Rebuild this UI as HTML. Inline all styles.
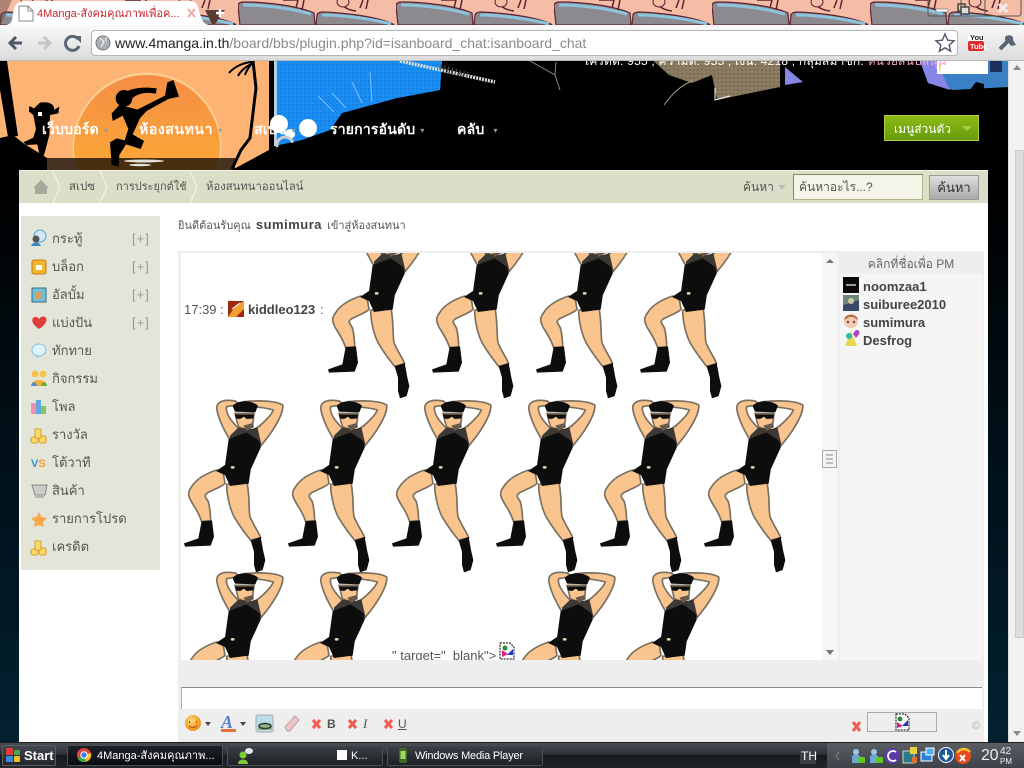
<!DOCTYPE html>
<html lang="th"><head><meta charset="utf-8"><title>4Manga</title>
<style>
*{box-sizing:border-box}
html,body{margin:0;padding:0;width:1024px;height:768px;overflow:hidden;background:#000}
body{font-family:"Liberation Sans","DejaVu Sans","Noto Sans CJK SC",sans-serif;font-size:12px;color:#555;position:relative}
.a{position:absolute;white-space:nowrap}
.n{color:#fff;font-weight:bold;font-size:14px;top:120px;line-height:18px;letter-spacing:.2px}
.n i{font-style:normal;font-size:8px;color:#999;margin-left:5px;vertical-align:1px}
.s{left:52px;font-size:13px;color:#555;line-height:16px}
.p{left:132px;font-size:13px;color:#999;line-height:16px;letter-spacing:1px}
.u{left:863px;font-size:13px;font-weight:bold;color:#444;line-height:16px}
.t{color:#fff;font-size:11px;line-height:16px;top:748px}
.bc{font-size:11.5px;line-height:15px;top:180px}
.task{position:absolute;top:745px;height:21px;width:156px;border:1px solid #4a4e55;border-radius:2px;background:linear-gradient(#3c4046,#1e2126)}
</style></head><body>
<div class="a" style="left:0;top:170px;width:1024px;height:572px;background:linear-gradient(#000 0,#011019 50%,#022130 100%)"></div>

<!-- banner -->
<svg class="a" style="left:0;top:55px" width="1008" height="115" viewBox="0 55 1008 115">
<defs>
<linearGradient id="sun" x1="0" y1="0" x2="0" y2="1"><stop offset="0" stop-color="#f58d45"/><stop offset="1" stop-color="#fdb62f"/></linearGradient>
<pattern id="blue" width="4" height="4" patternUnits="userSpaceOnUse"><rect width="4" height="4" fill="#1a8df3"/><circle cx="1" cy="1" r=".8" fill="#0c72da"/></pattern>
<pattern id="tan" width="4" height="4" patternUnits="userSpaceOnUse"><rect width="4" height="4" fill="#8a7c66"/><circle cx="2" cy="2" r="1" fill="#7a6a3e"/></pattern>
</defs>
<rect x="0" y="55" width="1008" height="115" fill="#000"/>
<rect x="0" y="55" width="269" height="115" fill="#fcb374"/>
<circle cx="147" cy="147" r="74.500" fill="#fdcd93"/>
<circle cx="147" cy="148" r="73" fill="url(#sun)"/>
<rect x="45" y="158" width="190" height="12" fill="#000" opacity=".72"/>
<path d="M0,138L13,135L23,143L47,158V170H0Z" fill="#000"/>
<path d="M232,170L269,150V170Z" fill="#000"/>
<path d="M0,61H7L18,136L8,137L0,90Z" fill="#000"/>
<path d="M232,169L241,150L250,138L256,88L253,61" stroke="#000" stroke-width="3" fill="none"/>
<path d="M253,62C245,62 235,66 229,73M253,63C247,66 241,70 238,76M253,62C249,67 246,71 245,75" stroke="#000" stroke-width="2" fill="none"/>
<g transform="translate(0,55) scale(.33333)" fill="#000">
<circle cx="372" cy="130" r="25"/>
<path d="M350,140C365,105 410,92 470,100L468,116C425,108 400,120 385,145Z"/>
<path d="M400,170L495,122L502,82L520,75L537,125L505,132L440,168L405,205Z"/>
<path d="M358,150L430,168L398,238L432,258L422,282L378,268L358,300L356,335L335,330L330,262L350,250L374,256L385,222L368,182L338,198L335,175Z"/>
<path d="M120,143C150,138 165,150 162,165L178,155L175,175L150,180L148,240L135,290L130,305L118,298L112,268L80,270L70,262L100,248L108,222L100,180L87,170L88,153L102,160Z"/>
</g>
<g fill="#fff" opacity=".85"><ellipse cx="144" cy="161" rx="20" ry="1.500"/><ellipse cx="140" cy="165" rx="11" ry="1.200"/></g>
<rect x="38" y="112" width="4" height="4" fill="#fff"/>
<!-- blue -->
<path d="M277,61H442L440,90L397,98L342,113L330,130L302,140L274,146V110L277,108Z" fill="#1a8df3"/>
<path d="M277,61H442L440,90L397,98L342,113L330,130L302,140L274,146V110L277,108Z" fill="url(#blue)"/>
<rect x="274" y="61" width="3" height="85" fill="#b7cfe6"/>
<circle cx="308" cy="128" r="9" fill="#fff"/><circle cx="279" cy="124" r="9" fill="#fff"/><circle cx="290" cy="134" r="5" fill="#fff"/>
<circle cx="285" cy="145" r="8" fill="none" stroke="#ccc" stroke-width="3"/>
<path d="M274,148L302,140L330,131V170H274Z" fill="#000"/>
<path d="M400,61L495,82" stroke="#ddd" stroke-width="3.500" stroke-dasharray="2 1"/>
<path d="M440,67L470,76" stroke="#555" stroke-width="6" stroke-dasharray="1 3"/>
<g stroke="#7dc0ff" stroke-width="1" fill="none"><path d="M352,82L362,103M318,96L334,112M332,93L346,108M370,72L372,102"/></g>
<!-- tan -->
<path d="M647,55H780V87L717,100L712,75L692,83L669,75Z" fill="url(#tan)"/>
<path d="M664,105C672,94 680,86 692,81" stroke="#a89a84" fill="none"/>
<path d="M715,88V100L730,96" stroke="#fff" fill="none"/>
<path d="M530,61L555,75L560,90M555,75L556,62" stroke="#888" fill="none"/>
<!-- right -->
<path d="M785,67L803,82L785,85Z" fill="#8686e6"/>
<path d="M920,61H1008V87L953,90L928,83Z" fill="#3a80c4"/>
<path d="M920,61H936L950,90L928,83Z" fill="#8686e6"/>
<rect x="937" y="60" width="51" height="14" fill="#fff"/>
<path d="M939,62A8,8,0,0,1,939,72Z" fill="#fcd25c"/>
<rect x="990" y="60" width="12" height="12" fill="#1d2f5b"/>
<path d="M970,90L976,82L984,84V90Z" fill="#000"/>
</svg>
<div class="a" style="left:585px;top:54px;color:#fff;font-size:12px;line-height:14px;letter-spacing:.2px">เครดิต: 955 , ความดี: 955 , เงิน: 4218 , กลุ่มสมาชิก: <span style="color:#f4a0c8">หน่วยสนับสนุน</span></div>

<!-- tab strip & toolbar -->
<svg class="a" style="left:0;top:0" width="1024" height="26" viewBox="0 0 1024 26">
<defs><pattern id="tile" x="80" y="0" width="158" height="26" patternUnits="userSpaceOnUse">
<rect width="158" height="26" fill="#f5bda6"/>
<path d="M2,25L0,6Q0,2 6,2C30,2 60,6 76,13L77,25Z" fill="#8c8a8e" stroke="#5b2330" stroke-width="1.200"/>
<path d="M5,5C30,5 55,9 73,14" stroke="#8cc4de" stroke-width="3" fill="none"/>
<path d="M78,25L79,15Q80,12 85,12C110,13 140,17 155,24L156,25Z" fill="#8c8a8e" stroke="#5b2330" stroke-width="1.200"/>
<path d="M84,15C105,15 135,19 153,24" stroke="#8cc4de" stroke-width="3" fill="none"/>
<path d="M100,0C103,5 108,10 118,11M125,0L122,8M130,0L128,9" stroke="#5b2330" stroke-width="1.500" fill="none"/>
<ellipse cx="105" cy="2" rx="6" ry="5" fill="#f5bda6" stroke="#5b2330"/>
<path d="M60,0L58,8M66,0L64,10M45,0H60" stroke="#5b2330" stroke-width="1.500" fill="none"/>
</pattern></defs>
<rect width="1024" height="26" fill="url(#tile)"/>
<path d="M0,0H12L2,22L0,24Z" fill="#6b4a42" opacity=".5"/>
<path d="M212,24L205,10L225,10L215,24Z" fill="#5b3a30"/>
<path d="M220,9V17M216,13H224" stroke="#fff" stroke-width="2.500"/>
<path d="M6,25C12,24 12,20 13,14C14,6 16,1 26,1H190C197,1 198,6 200,14C202,20 203,24 209,25Z" fill="#fff"/>
<path d="M19,6H28L33,11V21H19Z" fill="#fff" stroke="#888"/><path d="M28,6V11H33" stroke="#888" fill="none"/>
<path d="M188,9L195,17M195,9L188,17" stroke="#f3a8a8" stroke-width="2"/>
<g fill="none"><rect x="928" y="-3" width="33" height="19" rx="2" stroke="#555"/><rect x="961" y="-3" width="24" height="19" stroke="#555"/><rect x="985" y="-3" width="36" height="19" rx="2" stroke="#555"/></g>
<rect x="936" y="9" width="12" height="3" fill="#fff" stroke="#555" stroke-width=".5"/>
<rect x="958" y="4" width="7" height="7" fill="none" stroke="#444" stroke-width="1.500"/><rect x="961" y="7" width="8" height="7" fill="#ddd" stroke="#444" stroke-width="1.500"/>
<path d="M999,4L1007,12M1007,4L999,12" stroke="#eee" stroke-width="3"/>
</svg>
<div class="a" style="left:37px;top:6px;font-size:11px;color:#c8232c;line-height:16px">4Manga-สังคมคุณภาพเพื่อค...</div>

<div class="a" style="left:0;top:25px;width:1024px;height:36px;background:linear-gradient(#f9f9f9,#dcdcdc);border-bottom:1px solid #b8b8b8"></div>
<div class="a" style="left:91px;top:30px;width:867px;height:26px;background:#fff;border:1px solid #b5b5b5;border-radius:4px"></div>
<svg class="a" style="left:0;top:25px" width="1024" height="36" viewBox="0 25 1024 36">
<path d="M22,43H11M16,37L10,43L16,49" stroke="#4d5868" stroke-width="3" fill="none"/>
<path d="M38,43H49M44,37L50,43L44,49" stroke="#c4c6c8" stroke-width="3" fill="none"/>
<path d="M78,39A7,7,0,1,0,79,46" stroke="#5b6573" stroke-width="3" fill="none"/><path d="M74,36H81V43Z" fill="#5b6573"/>
<circle cx="103" cy="43" r="7" fill="#aab0b8" stroke="#777"/><path d="M100,38L104,42L101,47M106,37V41" stroke="#fff" fill="none"/>
<path d="M945,34L947.700,40.200L954,40.800L949.200,45L950.600,51.200L945,47.800L939.400,51.200L940.800,45L936,40.800L942.300,40.200Z" fill="#fff" stroke="#566070" stroke-width="1.500"/>
<rect x="968" y="34" width="16" height="8" fill="#fff"/><rect x="968" y="41" width="16" height="10" rx="2" fill="#dd2a2a"/>
<path d="M1000,49L1008,41" stroke="#5a6472" stroke-width="4"/><path d="M1006,36C1010,34 1014,36 1013,40L1016,45L1011,46L1008,42C1005,42 1004,38 1006,36Z" fill="#5a6472"/>
</svg>
<div class="a" style="left:115px;top:34px;font-size:14px;line-height:18px;color:#8a8a8a"><span style="color:#222">www.4manga.in.th</span>/board/bbs/plugin.php?id=isanboard_chat:isanboard_chat</div>
<div class="a" style="left:970px;top:34px;font-size:7.500px;font-weight:bold;color:#222;line-height:8px">You</div>
<div class="a" style="left:970px;top:43px;font-size:7.500px;font-weight:bold;color:#fff;line-height:8px">Tube</div>

<!-- nav -->
<div class="a n" style="left:42px">เว็บบอร์ด<i>▾</i></div>
<div class="a n" style="left:139px;letter-spacing:.6px">ห้องสนทนา<i>▾</i></div>
<div class="a n" style="left:254px">สเปซ<i>▾</i></div>
<div class="a n" style="left:330px">รายการอันดับ<i>▾</i></div>
<div class="a n" style="left:457px">คลับ <i>▾</i></div>
<div class="a" style="left:884px;top:115px;width:95px;height:26px;border:1px solid #b5cb3e;background:linear-gradient(#8dbb16,#659a0c);color:#fff;line-height:26px;padding-left:9px;font-size:12px">เมนูส่วนตัว<span style="position:absolute;left:77px;top:10px;width:0;height:0;border:5px solid transparent;border-top:5px solid #a8cc4a"></span></div>

<!-- main -->
<div class="a" style="left:19px;top:170px;width:969px;height:572px;background:#fff"></div>
<div class="a" style="left:19px;top:170px;width:969px;height:33px;background:#dcdfc8;border-top:1px solid #f4f5ea"></div>
<svg class="a" style="left:19px;top:170px" width="200" height="33" viewBox="19 170 200 33">
<path d="M33,188L41,180L49,188H47V194H35V188Z" fill="#a8a89c"/>
<path d="M53,171L60,187L53,203M100,171L107,187L100,203M190,171L197,187L190,203" stroke="#f4f5ea" stroke-width="1" fill="none"/>
</svg>
<div class="a bc" style="left:69px">สเปซ</div>
<div class="a bc" style="left:116px;font-size:11px">การประยุกต์ใช้</div>
<div class="a bc" style="left:206px;font-size:11.300px">ห้องสนทนาออนไลน์</div>
<div class="a" style="left:743px;top:180px;line-height:15px">ค้นหา<span style="display:inline-block;margin-left:4px;width:0;height:0;border:4px solid transparent;border-top:5px solid #bbb;vertical-align:-3px"></span></div>
<div class="a" style="left:793px;top:174px;width:130px;height:26px;background:#f4f5e8;border:1px solid #b3b38e;border-top-color:#84845c;border-left-color:#84845c;padding-left:5px;line-height:24px">ค้นหาอะไร...?</div>
<div class="a" style="left:929px;top:175px;width:50px;height:25px;background:linear-gradient(#dedede,#aaa);border:1px solid #999;text-align:center;line-height:23px;font-size:13px;color:#333">ค้นหา</div>

<!-- sidebar -->
<div class="a" style="left:21px;top:216px;width:139px;height:354px;background:#e4e5d9"></div>
<svg class="a" style="left:21px;top:225px" width="30" height="335" viewBox="21 225 30 335">
<circle cx="40" cy="236" r="6" fill="#cfe8fa" stroke="#5a9fd0"/><circle cx="36" cy="239" r="3.500" fill="#555"/><path d="M31,246C33,241 39,241 41,246Z" fill="#3a88c8"/>
<rect x="32" y="260" width="14" height="14" rx="2" fill="#f6b42c" stroke="#c27d10"/><rect x="36" y="265" width="6" height="5" fill="#fff"/>
<rect x="32" y="288" width="14" height="14" fill="#72bfd8" stroke="#3b6c8a"/><rect x="36" y="292" width="6" height="7" fill="#d9a060"/>
<path d="M39,329C33,325 31,321 33,318C35,316 38,317 39,319C40,317 44,315 46,318C48,321 44,326 39,329Z" fill="#e23c3c"/>
<ellipse cx="39" cy="350" rx="7" ry="6" fill="#dff1fb" stroke="#86c0e2"/><path d="M37,355L36,358L40,356Z" fill="#86c0e2"/>
<circle cx="35" cy="374" r="3.500" fill="#f8c24c"/><circle cx="43" cy="374" r="3.500" fill="#f8c24c"/><path d="M31,386C31,378 47,378 47,386Z" fill="#f4b030"/><path d="M31,386C32,381 36,381 37,386Z" fill="#4a90d0"/><path d="M41,386C42,381 46,381 47,386Z" fill="#60b040"/>
<rect x="31" y="403" width="5" height="11" fill="#f090b0"/><rect x="36" y="400" width="5" height="14" fill="#60a8e0"/><rect x="41" y="406" width="5" height="8" fill="#80c860"/>
<rect x="31" y="437" width="7" height="6" rx="2" fill="#fcd868" stroke="#d8a030"/><rect x="39" y="436" width="7" height="7" rx="2" fill="#fcd868" stroke="#d8a030"/><rect x="35" y="429" width="6" height="9" rx="1" fill="#fcd868" stroke="#d8a030"/>
<text x="31" y="467" font-family="Liberation Sans" font-size="11" font-weight="bold" fill="#2a94d0">V<tspan fill="#f0a030">S</tspan></text>
<path d="M32,485H47L45,495H35ZM35,497H44" fill="#c8cdc8" stroke="#888"/>
<path d="M39,512L41.500,517L47,518L43,522L44,527L39,525L34,527L35,522L31,518L36.500,517Z" fill="#f8a848"/>
<rect x="31" y="549" width="7" height="6" rx="2" fill="#fcd868" stroke="#d8a030"/><rect x="39" y="548" width="7" height="7" rx="2" fill="#fcd868" stroke="#d8a030"/><rect x="35" y="541" width="6" height="9" rx="1" fill="#fcd868" stroke="#d8a030"/>
</svg>
<div class="a s" style="top:231px">กระทู้</div><div class="a p" style="top:231px">[+]</div>
<div class="a s" style="top:259px">บล็อก</div><div class="a p" style="top:259px">[+]</div>
<div class="a s" style="top:287px">อัลบั้ม</div><div class="a p" style="top:287px">[+]</div>
<div class="a s" style="top:315px">แบ่งปัน</div><div class="a p" style="top:315px">[+]</div>
<div class="a s" style="top:343px">ทักทาย</div>
<div class="a s" style="top:371px">กิจกรรม</div>
<div class="a s" style="top:399px">โพล</div>
<div class="a s" style="top:427px">รางวัล</div>
<div class="a s" style="top:455px">โต้วาที</div>
<div class="a s" style="top:483px">สินค้า</div>
<div class="a s" style="top:511px">รายการโปรด</div>
<div class="a s" style="top:539px">เครดิต</div>

<div class="a" style="left:178px;top:217px;line-height:16px;font-size:11px">ยินดีต้อนรับคุณ <b style="color:#444;font-size:13px;letter-spacing:.5px;margin:0 2px">sumimura</b> เข้าสู่ห้องสนทนา</div>

<!-- chat box -->
<div class="a" style="left:178px;top:251px;width:806px;height:491px;background:#eee"></div>
<div class="a" style="left:181px;top:253px;width:641px;height:407px;background:#fff"></div>
<svg class="a" style="left:181px;top:253px" width="641" height="407" viewBox="181 253 641 407">
<defs><filter id="b" x="-5%" y="-5%" width="110%" height="110%"><feGaussianBlur stdDeviation=".35"/></filter>
<g id="d" transform="scale(.33333) translate(-12,-12)" filter="url(#b)">
<g fill="#f9c48d" stroke="#7a7060" stroke-width="5" stroke-linejoin="round">
<path d="M150,135C135,110 115,75 110,40C110,20 130,12 165,18L180,28L140,35C135,50 150,75 175,100Z"/>
<path d="M190,20C240,15 290,18 308,30C312,55 280,110 240,155L222,105C245,90 275,60 280,45C255,38 225,35 205,35Z"/>
<path d="M165,55L222,55L218,90L200,105L175,95Z"/>
<path d="M110,225C80,235 50,250 35,275C20,295 25,305 40,330C50,345 60,365 65,380L92,378C92,360 90,340 85,320C75,305 70,300 85,292C110,280 130,272 135,265L130,235Z"/>
<path d="M140,268L200,258C210,300 205,340 210,365C220,390 235,410 242,428L212,436C195,415 180,395 165,370C150,345 140,300 140,268Z"/>
</g>
<path d="M150,122L175,98L215,102L232,96L245,152L150,138Z" fill="#3a3834"/>
<g fill="#0a0a0a">
<path d="M158,34C170,14 215,14 234,32L226,52L165,50Z"/>
<path d="M165,58L222,58L220,70L200,72L192,65L180,72L168,70Z"/>
<path d="M190,92L218,84L222,96L200,108Z" fill="#6b5a48"/>
<path d="M146,132L200,112L238,138L242,158L210,228L135,212Z"/>
<path d="M108,228L135,210L212,225L206,266L150,273L135,240Z"/>
<path d="M65,378L96,376L102,425L92,452L15,455L12,445L55,430Z"/>
<path d="M212,436L242,426L250,470L256,495L248,525L228,532L222,510L222,470Z"/>
</g>
<ellipse cx="158" cy="217" rx="6" ry="4" fill="#e8d6b0"/>
</g></defs>
<use href="#d" x="328" y="225"/><use href="#d" x="432" y="225"/><use href="#d" x="536" y="225"/><use href="#d" x="640" y="225"/>
<use href="#d" x="184" y="399"/><use href="#d" x="288" y="399"/><use href="#d" x="392" y="399"/><use href="#d" x="496" y="399"/><use href="#d" x="600" y="399"/><use href="#d" x="704" y="399"/>
<use href="#d" x="184" y="571"/><use href="#d" x="288" y="571"/><use href="#d" x="516" y="571"/><use href="#d" x="620" y="571"/>
<!-- avatar -->
<rect x="228" y="301" width="16" height="16" fill="#a02810"/><path d="M228,317L236,305L244,301V309L236,317Z" fill="#f0a030"/><path d="M232,309L240,303" stroke="#fff"/>
<!-- broken image -->
<path d="M500,643H510L514,647V659H500Z" fill="#fff" stroke="#000" stroke-dasharray="2 1"/><circle cx="505" cy="648" r="2.500" fill="#2a8a3a"/><path d="M502,650L508,654L502,657Z" fill="#e0208a"/><path d="M513,649L507,655H513Z" fill="#2030c0"/>
</svg>
<div class="a" style="left:184px;top:302px;font-size:13px;line-height:16px;color:#555">17:39 :</div>
<div class="a" style="left:248px;top:302px;font-size:13px;line-height:16px;font-weight:bold;color:#444">kiddleo123</div>
<div class="a" style="left:320px;top:302px;font-size:13px;line-height:16px;color:#555">:</div>
<div class="a" style="left:392px;top:649px;font-size:13px;line-height:14px;height:11px;overflow:hidden;color:#555">" target="_blank"&gt;</div>

<!-- chat scrollbar -->
<div class="a" style="left:822px;top:253px;width:16px;height:407px;background:#f6f6f6"></div>
<svg class="a" style="left:822px;top:253px" width="16" height="407" viewBox="822 253 16 407">
<path d="M826,263L830,259L834,263Z" fill="#777"/>
<path d="M826,650L830,655L834,650Z" fill="#777"/>
<rect x="822.500" y="450.500" width="14" height="17" fill="#f4f4f4" stroke="#aaa"/><path d="M826,455H833M826,459H833M826,463H833" stroke="#888"/>
</svg>

<!-- users -->
<div class="a" style="left:838px;top:251px;width:146px;height:409px;background:#eee"></div>
<div class="a" style="left:840px;top:274px;width:142px;height:386px;background:#f5f5f5"></div>
<div class="a" style="left:838px;top:256px;width:146px;text-align:center;line-height:16px;color:#666">คลิกที่ชื่อเพื่อ PM</div>
<svg class="a" style="left:843px;top:277px" width="17" height="72" viewBox="843 277 17 72">
<rect x="843" y="277" width="16" height="16" fill="#0a0a0a"/><rect x="846" y="284" width="10" height="2" fill="#999"/>
<rect x="843" y="295" width="16" height="16" fill="#6e8878"/><path d="M843,305L859,300V311H843Z" fill="#3a4868"/><circle cx="851" cy="301" r="3" fill="#c8c8a0"/>
<circle cx="851" cy="321" r="7" fill="#f3c7ae"/><path d="M844,320C845,313 857,313 858,320L853,317L849,317Z" fill="#b46a50"/><circle cx="848" cy="322" r="1.200" fill="#744"/><circle cx="854" cy="322" r="1.200" fill="#744"/>
<path d="M845,346L851,331L857,346Z" fill="#e8d84c"/><circle cx="849" cy="336" r="3" fill="#2fb8b0"/><path d="M855,331A2,2,0,0,1,859,334L856,338L853,334Z" fill="#b040c0"/>
</svg>
<div class="a u" style="top:279px">noomzaa1</div>
<div class="a u" style="top:297px">suiburee2010</div>
<div class="a u" style="top:315px">sumimura</div>
<div class="a u" style="top:333px">Desfrog</div>

<!-- input -->
<div class="a" style="left:181px;top:687px;width:801px;height:22px;background:#fff;border-top:1px solid #8c8c8c;border-left:1px solid #b0b0b0"></div>

<!-- tools -->
<svg class="a" style="left:178px;top:710px" width="806" height="32" viewBox="178 710 806 32">
<defs><radialGradient id="sm" cx=".4" cy=".35"><stop offset="0" stop-color="#fde07a"/><stop offset="1" stop-color="#f49a24"/></radialGradient></defs>
<circle cx="193" cy="723" r="8" fill="url(#sm)"/><path d="M189,722h1M196,722h1" stroke="#a05a10" stroke-width="2"/><path d="M189,726Q193,729 197,726" stroke="#a05a10" fill="none"/>
<path d="M205,722H211L208,726Z" fill="#444"/>
<text x="221" y="728" font-family="Liberation Serif" font-style="italic" font-weight="bold" font-size="18" fill="#5a7fd0">A</text>
<rect x="221" y="729" width="15" height="3" fill="#e8703c"/>
<path d="M240,722H246L243,726Z" fill="#444"/>
<rect x="256" y="715" width="17" height="17" rx="2" fill="#bcdcec" stroke="#aaa"/><path d="M258,728L265,722L272,727V730H258Z" fill="#8cbc7c"/><ellipse cx="265" cy="726" rx="6" ry="2.500" fill="none" stroke="#333" stroke-width="1.500"/>
<path d="M285,727L295,716L299,720L290,731H287Z" fill="#f3c2c2" stroke="#aaa"/>
<g stroke="#f35b4f" stroke-width="3"><path d="M313,720L320,728M320,720L313,728M349,720L356,728M356,720L349,728M385,720L392,728M392,720L385,728M853,722L860,731M860,722L853,731"/></g>
<rect x="867.500" y="712.500" width="69" height="19" fill="none" stroke="#aaa"/>
<path d="M896,714H905L909,718V730H896Z" fill="#fff" stroke="#000" stroke-dasharray="2 1"/><circle cx="900" cy="719" r="2.500" fill="#2a8a3a"/><path d="M897,722L903,726L897,728Z" fill="#e0208a"/><path d="M908,720L902,726H908Z" fill="#2030c0"/>
<text x="972" y="729" font-family="Liberation Sans" font-size="11" fill="#aaa">©</text>
</svg>
<div class="a" style="left:327px;top:717px;font-weight:bold;color:#555;font-size:12px;line-height:14px">B</div>
<div class="a" style="left:363px;top:717px;font-style:italic;font-family:'Liberation Serif',serif;color:#555;font-size:13px;line-height:14px">I</div>
<div class="a" style="left:398px;top:717px;text-decoration:underline;color:#555;font-size:12px;line-height:14px">U</div>

<!-- page scrollbar -->
<div class="a" style="left:1008px;top:61px;width:16px;height:681px;background:#f1f1f1;border-left:1px solid #ddd"></div>
<div class="a" style="left:1015px;top:150px;width:9px;height:488px;background:#dcdcdc;border:1px solid #ccc"></div>
<svg class="a" style="left:1008px;top:61px" width="16" height="681" viewBox="1008 61 16 681">
<path d="M1013,70L1017,65L1021,70Z" fill="#888"/><path d="M1013,731L1017,736L1021,731Z" fill="#888"/>
</svg>

<!-- taskbar -->
<div class="a" style="left:0;top:742px;width:1024px;height:26px;background:linear-gradient(#484c52 0,#2e3137 45%,#15181c 50%,#23262b 100%);border-top:1px solid #1c1e22"></div>
<div class="a" style="left:2px;top:745px;width:54px;height:21px;border:1px solid #5a5e64;border-radius:2px;background:linear-gradient(#44484e,#23262b)"></div>
<svg class="a" style="left:5px;top:747px" width="17" height="17" viewBox="0 0 17 17"><rect x="1" y="1" width="7" height="7" rx="1" fill="#e63a3a"/><rect x="9" y="3" width="6" height="5" rx="1" fill="#4aa84a"/><rect x="1" y="9" width="7" height="6" rx="1" fill="#3a8ae0"/><rect x="9" y="9" width="6" height="6" rx="1" fill="#f0c020"/></svg>
<div class="a t" style="left:24px;font-weight:bold;font-size:13px">Start</div>
<div class="task" style="left:67px;background:linear-gradient(#1e2128,#0a0c12)"></div>
<div class="task" style="left:227px"></div>
<div class="task" style="left:387px"></div>
<svg class="a" style="left:76px;top:747px" width="16" height="16" viewBox="0 0 16 16"><circle cx="8" cy="8" r="7" fill="#e0443a"/><path d="M8,8L1.500,11A7,7,0,0,0,10,14.700Z" fill="#3aa84a"/><path d="M8,8L10,14.700A7,7,0,0,0,15,6Z" fill="#f4c430"/><circle cx="8" cy="8" r="3.200" fill="#3a80e0" stroke="#fff"/></svg>
<div class="a t" style="left:97px">4Manga-สังคมคุณภาพ...</div>
<svg class="a" style="left:236px;top:747px" width="18" height="18" viewBox="0 0 18 18"><circle cx="7" cy="8" r="3.500" fill="#7ccc3a"/><path d="M2,17C2,11 12,11 12,17Z" fill="#7ccc3a"/><ellipse cx="13" cy="4" rx="4" ry="3" fill="#e0e8f0"/></svg>
<div class="a" style="left:337px;top:750px;width:10px;height:10px;background:#fff"></div>
<div class="a t" style="left:351px">K...</div>
<svg class="a" style="left:398px;top:747px" width="10" height="17" viewBox="0 0 10 17"><rect x="1" y="1" width="8" height="15" rx="2" fill="#3a6a2a"/><rect x="2.500" y="4" width="5" height="8" fill="#9cdc5a"/></svg>
<div class="a t" style="left:415px;letter-spacing:-.2px">Windows Media Player</div>
<div class="a t" style="left:800px;background:#3b3e44;padding:0 1px;width:16px;font-size:12px;text-align:center">TH</div>
<div class="a" style="left:827px;top:743px;width:197px;height:25px;background:linear-gradient(#5a5e64,#3e4147)"></div>
<svg class="a" style="left:830px;top:746px" width="135" height="20" viewBox="0 0 135 20">
<path d="M9,6L6,10L9,14" stroke="#888" fill="none"/>
<circle cx="26" cy="6" r="3" fill="#9cc8e8"/><path d="M22,17V10Q26,7 30,10V17Z" fill="#6fa8d8"/><rect x="28" y="11" width="7" height="6" rx="1" fill="#5cc820"/>
<circle cx="44" cy="6" r="3" fill="#9cc8e8"/><path d="M40,17V10Q44,7 48,10V17Z" fill="#6fa8d8"/><rect x="46" y="11" width="7" height="6" rx="1" fill="#5cc820"/>
<circle cx="62" cy="10" r="8" fill="#5c3ca0"/><path d="M66,6A5,5,0,1,0,66,14" stroke="#fff" stroke-width="1.800" fill="none"/>
<rect x="73" y="5" width="11" height="12" fill="#2a7a8a" stroke="#c8d8d8"/><rect x="80" y="1" width="7" height="7" fill="#e8d040"/><rect x="82" y="11" width="5" height="6" fill="#e07030"/>
<rect x="91" y="6" width="11" height="9" fill="#2a80d8" stroke="#fff"/><rect x="96" y="2" width="8" height="7" fill="#4ab0f0" stroke="#fff"/>
<circle cx="116" cy="9" r="7.500" fill="#1a5a9a" stroke="#fff"/><path d="M116,4V12M113,9L116,13L119,9" stroke="#fff" stroke-width="2" fill="none"/>
</svg>
<svg class="a" style="left:953px;top:746px" width="20" height="20" viewBox="0 0 20 20"><circle cx="10" cy="10" r="8" fill="#e84a1a"/><path d="M4,7A8,8,0,0,1,17,6" stroke="#f8c030" stroke-width="2.500" fill="none"/><path d="M7,9L12,15M12,9L7,15" stroke="#fff" stroke-width="2"/></svg>
<div class="a" style="left:981px;top:747px;color:#eee;font-size:16px;line-height:18px;letter-spacing:-.3px">20</div>
<div class="a" style="left:1000px;top:747px;color:#eee;font-size:10px;line-height:10px">42</div>
<div class="a" style="left:1000px;top:757px;color:#eee;font-size:8px;line-height:9px">PM</div>
</body></html>
